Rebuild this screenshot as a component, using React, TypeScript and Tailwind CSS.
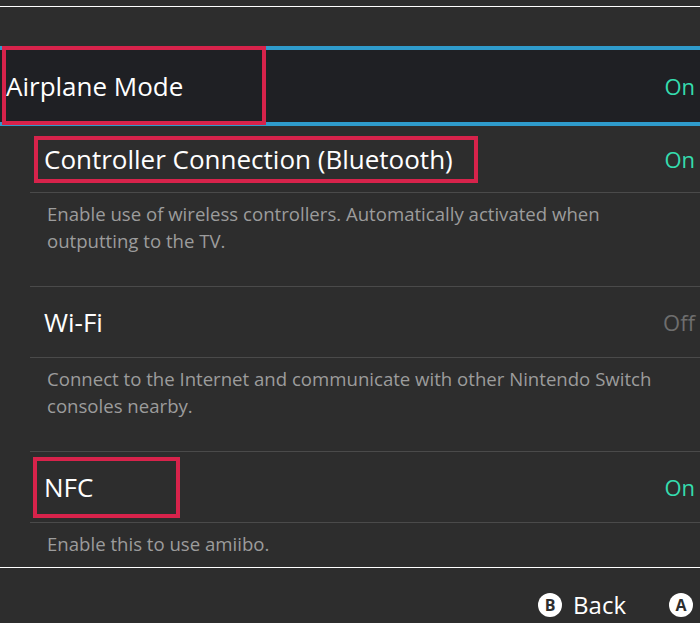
import React from "react";

const font = { fontFamily: '"Open Sans", "Noto Sans", sans-serif' };

function Toggle({ on }: { on: boolean }) {
  return (
    <span className={`text-[22px] ${on ? "text-[#35dcae]" : "text-[#6e6e6e]"}`}>
      {on ? "On" : "Off"}
    </span>
  );
}

function SettingRow({
  label,
  on,
  box,
}: {
  label: string;
  on: boolean;
  box?: string;
}) {
  return (
    <div className="relative flex h-[71px] items-center justify-between border-b border-[#4a4a4a] pl-[14px] pr-[5px]">
      <span className="text-[26px] text-white">{label}</span>
      <Toggle on={on} />
      {box && <div className={`pointer-events-none absolute border-[4px] border-[#d7234b] ${box}`} />}
    </div>
  );
}

function Description({ children, last }: { children: React.ReactNode; last?: boolean }) {
  return (
    <div
      className={`${last ? "h-[44px]" : "h-[94px] border-b border-[#4a4a4a]"} pl-[17px] pt-[7px]`}
    >
      <p className="max-w-[615px] text-[18.6px] leading-[27px] text-[#9c9c9c]">{children}</p>
    </div>
  );
}

function ButtonHint({ letter }: { letter: string }) {
  return (
    <span className="flex h-[24px] w-[24px] items-center justify-center rounded-full bg-white text-[16px] font-bold text-[#2d2d2d]">
      {letter}
    </span>
  );
}

export default function App() {
  return (
    <div className="flex h-[623px] w-[700px] flex-col overflow-hidden bg-[#2d2d2d]" style={font}>
      <div className="h-[46px] pt-[6px]">
        <div className="h-px bg-white" />
      </div>

      {/* selected row */}
      <div className="relative flex h-[80px] items-center justify-between border-y-[4px] border-[#2f9bcb] bg-[#1f2024] pl-[6px] pr-[5px]">
        <span className="text-[26px] text-white">Airplane Mode</span>
        <Toggle on />
        <div className="pointer-events-none absolute -top-[4px] left-[2px] h-[79px] w-[264px] border-[4px] border-[#d7234b]" />
      </div>

      <div className="flex-1 pl-[30px]">
        <div className="relative flex h-[67px] items-center justify-between border-b border-[#4a4a4a] pl-[14px] pr-[5px]">
          <span className="text-[26px] text-white">Controller Connection (Bluetooth)</span>
          <Toggle on />
          <div className="pointer-events-none absolute left-[4px] top-[10px] h-[47px] w-[444px] border-[4px] border-[#d7234b]" />
        </div>
        <Description>
          Enable use of wireless controllers. Automatically activated when outputting to the TV.
        </Description>
        <SettingRow label="Wi-Fi" on={false} />
        <Description>
          Connect to the Internet and communicate with other Nintendo Switch consoles nearby.
        </Description>
        <SettingRow label="NFC" on box="left-[3px] top-[5px] h-[61px] w-[147px]" />
        <Description last>Enable this to use amiibo.</Description>
      </div>

      <div className="flex h-[56px] items-start justify-end border-t border-white pr-[7px] pt-[25px]">
        <div className="flex items-center gap-[11px]">
          <ButtonHint letter="B" />
          <span className="text-[24px] leading-[24px] text-white">Back</span>
        </div>
        <div className="ml-[43px]">
          <ButtonHint letter="A" />
        </div>
      </div>
    </div>
  );
}
